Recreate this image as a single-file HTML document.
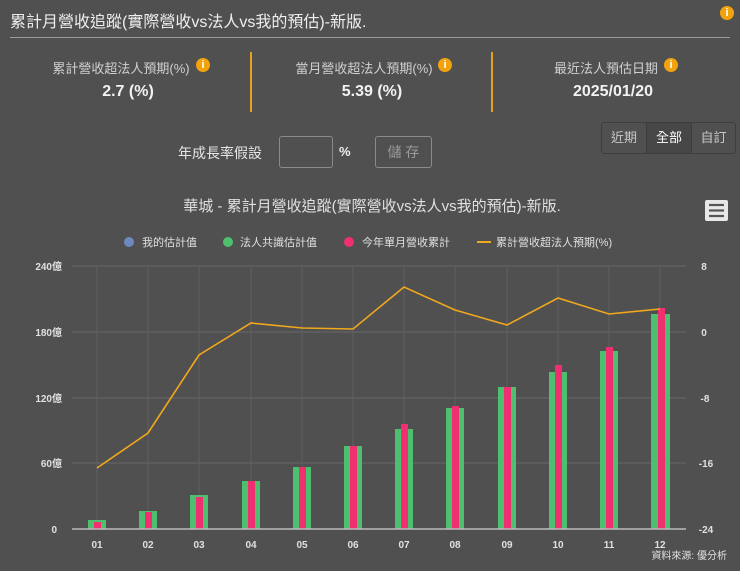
<!DOCTYPE html>
<html><head><meta charset="utf-8"><style>
*{margin:0;padding:0;box-sizing:border-box}
body{width:740px;height:571px;background:#505050;overflow:hidden;position:relative;font-family:"Liberation Sans","Noto Sans CJK TC",sans-serif;color:#eee}
.a{position:absolute;white-space:nowrap}
.info{position:absolute;width:14px;height:14px;border-radius:50%;background:#f2a20c;color:#fff;font-size:11px;font-weight:bold;text-align:center;line-height:14px}
.lab{font-size:13px;color:#d0d0d0;text-align:center;width:240px}
.val{font-size:16px;font-weight:bold;color:#f2f2f2;text-align:center;width:240px}
.box{position:absolute;border:1px solid #8a8a8a;border-radius:3px}
</style></head><body>
<div class="a" style="left:10px;top:8px;font-size:16px;color:#eee">累計月營收追蹤(實際營收vs法人vs我的預估)-新版.</div>
<div class="info" style="left:720px;top:6px">i</div>
<div class="a" style="left:10px;top:37px;width:720px;height:1px;background:#9a9a9a"></div>
<div class="a" style="left:250px;top:52px;width:2px;height:60px;background:#e5a21a"></div>
<div class="a" style="left:491px;top:52px;width:2px;height:60px;background:#e5a21a"></div>
<div class="a lab" style="left:1px;top:58px">累計營收超法人預期(%)</div>
<div class="info" style="left:196px;top:58px">i</div>
<div class="a val" style="left:8px;top:83px">2.7 (%)</div>
<div class="a lab" style="left:244px;top:58px">當月營收超法人預期(%)</div>
<div class="info" style="left:438px;top:58px">i</div>
<div class="a val" style="left:252px;top:83px">5.39 (%)</div>
<div class="a lab" style="left:486px;top:58px">最近法人預估日期</div>
<div class="info" style="left:664px;top:58px">i</div>
<div class="a val" style="left:493px;top:83px">2025/01/20</div>
<div class="a" style="left:178px;top:143px;font-size:14px;color:#e5e5e5">年成長率假設</div>
<div class="box" style="left:279px;top:136px;width:54px;height:32px"></div>
<div class="a" style="left:339px;top:144px;font-size:13px;font-weight:bold;color:#eee">%</div>
<div class="box" style="left:375px;top:136px;width:57px;height:32px;color:#9a9a9a;font-size:14px;text-align:center;line-height:30px">儲 存</div>
<div class="a" style="left:601px;top:122px;width:135px;height:32px;border:1px solid #3e3e3e;border-radius:3px;display:flex;font-size:13px;line-height:30px;text-align:center">
<div style="width:45px;color:#c8c8c8;border-right:1px solid #3e3e3e">近期</div>
<div style="width:45px;color:#fff;background:#474747;border-right:1px solid #3e3e3e">全部</div>
<div style="width:43px;color:#c8c8c8">自訂</div></div>
<svg class="a" style="left:0;top:0" width="740" height="571" font-family="Liberation Sans, Noto Sans CJK TC, sans-serif">
<text x="372" y="211" text-anchor="middle" font-size="15" fill="#e0e0e0">華城 - 累計月營收追蹤(實際營收vs法人vs我的預估)-新版.</text>
<rect x="705" y="200" width="23" height="21" rx="2" fill="#e8e8e8"/>
<g stroke="#555" stroke-width="2.2"><line x1="709" y1="205" x2="724" y2="205"/><line x1="709" y1="210.5" x2="724" y2="210.5"/><line x1="709" y1="216" x2="724" y2="216"/></g>
<g font-size="11" fill="#e0e0e0">
<circle cx="129" cy="242" r="5" fill="#7088c0"/><text x="142" y="246">我的估計值</text>
<circle cx="228" cy="242" r="5" fill="#4ebf6e"/><text x="240" y="246">法人共識估計值</text>
<circle cx="349" cy="242" r="5" fill="#ef2f6f"/><text x="362" y="246">今年單月營收累計</text>
<line x1="477" y1="242" x2="491" y2="242" stroke="#f0a81c" stroke-width="2"/><text x="496" y="246">累計營收超法人預期(%)</text>
</g>
<g stroke="#676767" stroke-width="1">
<line x1="72" y1="266" x2="686" y2="266"/><line x1="72" y1="332" x2="686" y2="332"/><line x1="72" y1="398" x2="686" y2="398"/><line x1="72" y1="463" x2="686" y2="463"/>
</g>
<g stroke="#606060" stroke-width="1">
<line x1="97" y1="266" x2="97" y2="529"/><line x1="148" y1="266" x2="148" y2="529"/><line x1="199" y1="266" x2="199" y2="529"/><line x1="251" y1="266" x2="251" y2="529"/><line x1="302" y1="266" x2="302" y2="529"/><line x1="353" y1="266" x2="353" y2="529"/><line x1="404" y1="266" x2="404" y2="529"/><line x1="455" y1="266" x2="455" y2="529"/><line x1="507" y1="266" x2="507" y2="529"/><line x1="558" y1="266" x2="558" y2="529"/><line x1="609" y1="266" x2="609" y2="529"/><line x1="660" y1="266" x2="660" y2="529"/>
</g>
<g fill="#4ebf6e">
<rect x="88" y="520" width="18" height="9"/><rect x="139" y="511" width="18" height="18"/><rect x="190" y="495" width="18" height="34"/><rect x="242" y="481" width="18" height="48"/><rect x="293" y="467" width="18" height="62"/><rect x="344" y="446" width="18" height="83"/><rect x="395" y="429" width="18" height="100"/><rect x="446" y="408" width="18" height="121"/><rect x="498" y="387" width="18" height="142"/><rect x="549" y="372" width="18" height="157"/><rect x="600" y="351" width="18" height="178"/><rect x="651" y="314" width="19" height="215"/>
</g>
<g fill="#ef2f6f">
<rect x="94" y="522" width="7" height="7"/><rect x="145" y="512" width="7" height="17"/><rect x="196" y="497" width="7" height="32"/><rect x="248" y="481" width="7" height="48"/><rect x="299" y="467" width="7" height="62"/><rect x="350" y="446" width="7" height="83"/><rect x="401" y="424" width="7" height="105"/><rect x="452" y="406" width="7" height="123"/><rect x="504" y="387" width="7" height="142"/><rect x="555" y="365" width="7" height="164"/><rect x="606" y="347" width="7" height="182"/><rect x="658" y="308" width="7" height="221"/>
</g>
<line x1="72" y1="529" x2="686" y2="529" stroke="#bbb" stroke-width="1.5"/>
<polyline fill="none" stroke="#f0a81c" stroke-width="1.6" points="97,468 148,433 199,355 251,323 302,328 353,329 404,287 455,310 507,325 558,298 609,314 660,309"/>
<g font-size="10" font-weight="bold" fill="#e0e0e0" text-anchor="end">
<text x="62" y="270">240億</text><text x="62" y="336">180億</text><text x="62" y="402">120億</text><text x="62" y="467">60億</text><text x="57" y="533">0</text>
</g>
<g font-size="10" font-weight="bold" fill="#e0e0e0" text-anchor="middle">
<text x="704" y="270">8</text><text x="704" y="336">0</text><text x="705" y="402">-8</text><text x="706" y="467">-16</text><text x="706" y="533">-24</text>
<text x="97" y="548">01</text><text x="148" y="548">02</text><text x="199" y="548">03</text><text x="251" y="548">04</text><text x="302" y="548">05</text><text x="353" y="548">06</text><text x="404" y="548">07</text><text x="455" y="548">08</text><text x="507" y="548">09</text><text x="558" y="548">10</text><text x="609" y="548">11</text><text x="660" y="548">12</text>
</g>
<text x="727" y="559" text-anchor="end" font-size="10" fill="#e0e0e0">資料來源: 優分析</text>
</svg>
</body></html>
